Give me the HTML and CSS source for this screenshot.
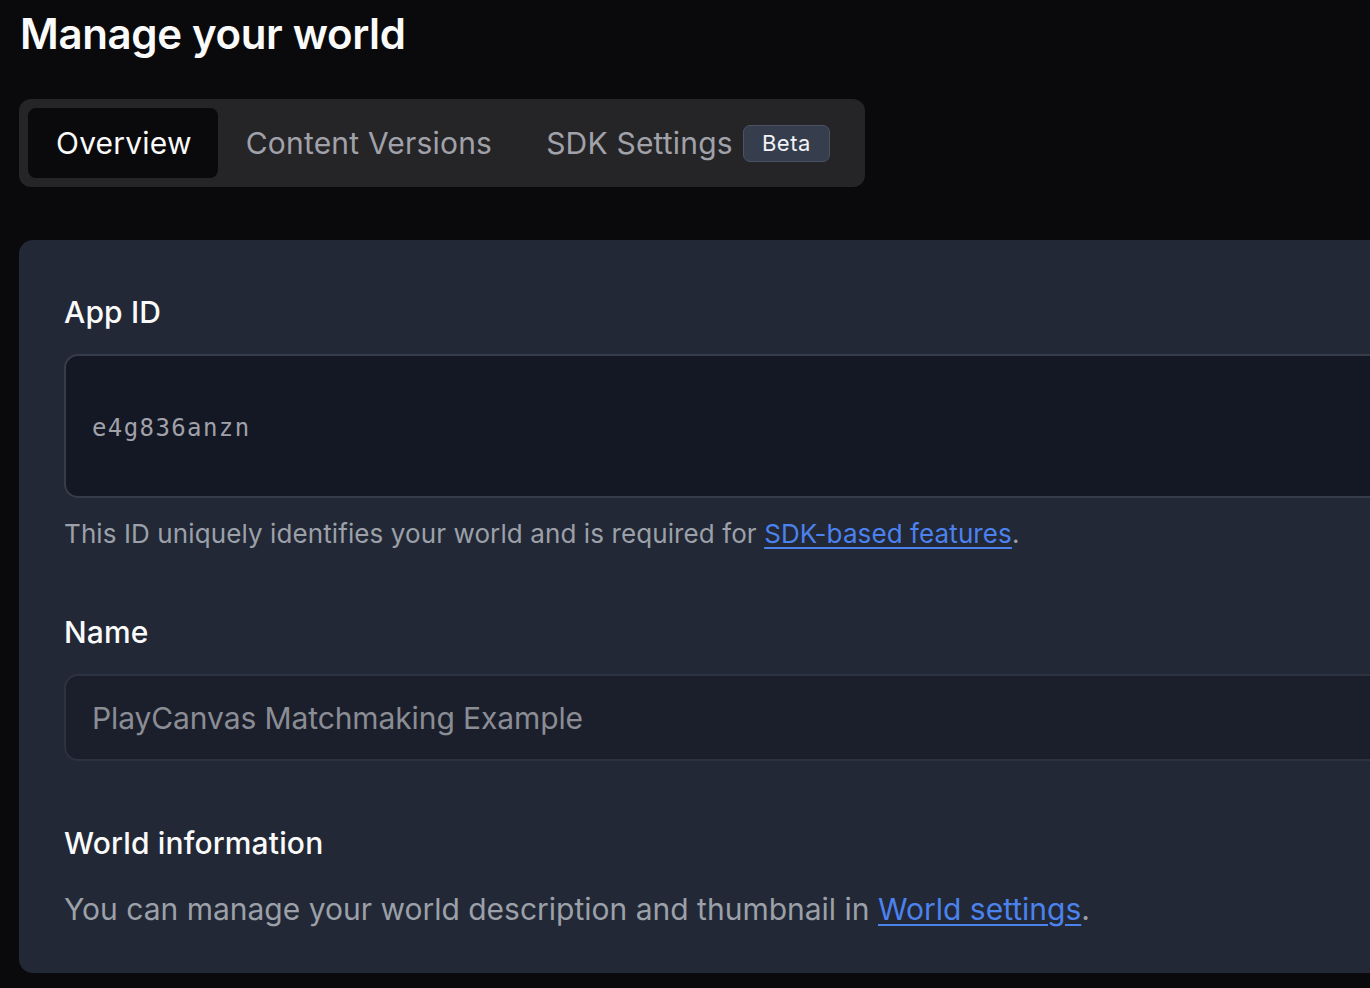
FILE: index.html
```html
<!DOCTYPE html>
<html lang="en">
<head>
<meta charset="utf-8">
<title>Manage your world</title>
<link rel="stylesheet" href="styles.css">
</head>
<body>
<main class="page">
  <h1 class="title">Manage your world</h1>
  <nav class="tabs">
    <a class="tab tab-active">Overview</a>
    <a class="tab">Content Versions</a>
    <a class="tab">SDK Settings <span class="badge">Beta</span></a>
  </nav>
  <section class="card">
    <div class="field">
      <h2 class="label">App ID</h2>
      <div class="input input-id">e4g836anzn</div>
      <p class="help">This ID uniquely identifies your world and is required for <a class="link" href="#">SDK-based features</a>.</p>
    </div>
    <div class="field">
      <h2 class="label">Name</h2>
      <div class="input input-name">PlayCanvas Matchmaking Example</div>
    </div>
    <div class="field">
      <h2 class="label">World information</h2>
      <p class="body">You can manage your world description and thumbnail in <a class="link" href="#">World settings</a>.</p>
    </div>
  </section>
</main>
</body>
</html>
```
FILE: styles.css
```css
html, body {
  margin: 0;
  padding: 0;
  background: #0a0a0c;
  overflow: hidden;
}
body {
  font-family: Inter, "Noto Sans", "Liberation Sans", sans-serif;
  color: #fafafa;
}
.page {
  width: 1500px;
  padding: 10px 0 0 19px;
}
.title {
  margin: 0 0 41px 1px;
  font-size: 42px;
  line-height: 48px;
  font-weight: 600;
  letter-spacing: -0.35px;
}
.tabs {
  display: inline-flex;
  align-items: center;
  background: #252527;
  border-radius: 12px;
  padding: 9px;
}
.tab {
  display: flex;
  align-items: center;
  gap: 10px;
  height: 70px;
  padding: 0 26px 0 28px;
  font-size: 30px;
  letter-spacing: 0.2px;
  color: #a1a1aa;
  border-radius: 8px;
  box-sizing: border-box;
}
.tab-active {
  background: #0a0a0c;
  color: #fafafa;
}
.badge {
  display: inline-flex;
  align-items: center;
  height: 37px;
  padding: 0 18px;
  box-sizing: border-box;
  background: #363e4e;
  border: 1.5px solid #4a5264;
  border-radius: 7px;
  font-size: 22px;
  color: #f1f3f6;
  letter-spacing: 0.5px;
}
.card {
  margin-top: 53px;
  background: #222836;
  border-radius: 14px;
  padding: 54px 0 44px 45px;
  display: flex;
  flex-direction: column;
  gap: 64px;
}
.field {
  display: flex;
  flex-direction: column;
}
.label {
  margin: 0;
  font-size: 30px;
  line-height: 36px;
  font-weight: 500;
  letter-spacing: 0.15px;
  color: #fafafa;
}
.input {
  margin-top: 24px;
  border-radius: 14px;
  display: flex;
  align-items: center;
  padding-left: 26px;
  box-sizing: border-box;
}
.input-id {
  height: 144px;
  padding-top: 4px;
  background: #131824;
  border: 2px solid #363c4a;
  font-family: "DejaVu Sans Mono", "Liberation Mono", monospace;
  font-size: 24px;
  letter-spacing: 1.4px;
  color: #a1a1aa;
}
.input-name {
  height: 87px;
  background: #1b1f2b;
  border: 2px solid #2c3240;
  font-size: 30px;
  letter-spacing: -0.1px;
  color: #8b8d95;
}
.help {
  margin: 20px 0 0;
  font-size: 26px;
  line-height: 32px;
  letter-spacing: 0.1px;
  color: #9ca0a8;
}
.body {
  margin: 28px 0 0;
  font-size: 30px;
  line-height: 40px;
  color: #9ca0a8;
}
.link {
  color: #4b82ee;
  text-decoration: underline;
  text-decoration-thickness: 2px;
  text-underline-offset: 4px;
}
```
